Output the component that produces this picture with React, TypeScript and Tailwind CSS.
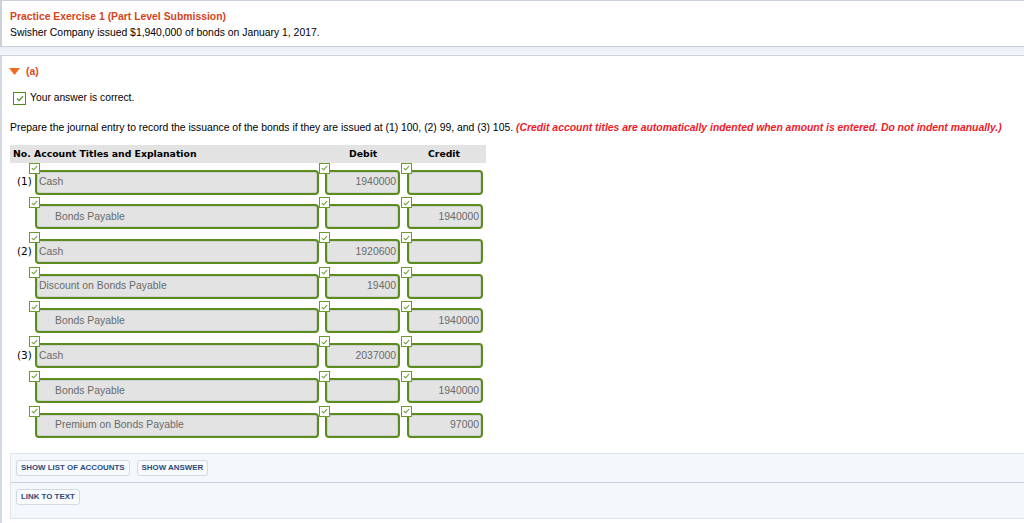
import React from 'react';

type Row = { no?: string; account: string; indent?: boolean; debit?: string; credit?: string };

const rows: Row[] = [
  { no: '(1)', account: 'Cash', debit: '1940000' },
  { account: 'Bonds Payable', indent: true, credit: '1940000' },
  { no: '(2)', account: 'Cash', debit: '1920600' },
  { account: 'Discount on Bonds Payable', debit: '19400' },
  { account: 'Bonds Payable', indent: true, credit: '1940000' },
  { no: '(3)', account: 'Cash', debit: '2037000' },
  { account: 'Bonds Payable', indent: true, credit: '1940000' },
  { account: 'Premium on Bonds Payable', indent: true, credit: '97000' },
];

function MiniCheck() {
  return (
    <span className="absolute -left-[6px] -top-[7px] flex h-[11px] w-[11px] items-center justify-center border border-[#6a9a2e] bg-white">
      <svg width="7" height="6" viewBox="0 0 7 6">
        <path d="M0.8 3.2 L2.7 4.8 L6.2 1" fill="none" stroke="#5f9a2a" strokeWidth="1.1" />
      </svg>
    </span>
  );
}

function Field({ width, value, align, indent }: { width: string; value?: string; align?: 'right'; indent?: boolean }) {
  return (
    <div className={`relative ${width}`}>
      <MiniCheck />
      <div
        className={`flex h-[25px] items-center rounded-[4px] border-2 border-[#5b8c1e] bg-[#e3e3e3] text-[10.4px] text-[#6a6a6a] shadow-[inset_0_0_0_1px_#d0d0d0] ${
          align === 'right' ? 'justify-end pr-[2px]' : indent ? 'pl-[18px]' : 'pl-[2px]'
        }`}
      >
        {value}
      </div>
    </div>
  );
}

const btn =
  'flex h-[16px] items-center rounded-[3px] border border-[#d3dae4] bg-[#f8fafc] px-[4px] text-[7.9px] font-bold text-[#2c4a7c]';

export default function App() {
  return (
    <div className="min-h-[523px] w-[1024px] bg-white font-['Liberation_Sans',Arial,sans-serif] text-black">
      <div className="h-[47px] border-t border-l-2 border-b border-[#cbd2dc] px-[8px] pt-[8px] text-[10.4px] leading-[16px]">
        <div className="font-bold text-[#d4451c]">Practice Exercise 1 (Part Level Submission)</div>
        <div>Swisher Company issued $1,940,000 of bonds on January 1, 2017.</div>
      </div>
      <div className="h-[9px] border-b border-[#cbd2dc] bg-gradient-to-b from-[#e8edf4] to-[#f4f7fa]" />

      <div className="border-l-2 border-[#d3d9e3] pb-[5px]">
        <div className="flex h-[30px] items-center gap-[6px] pl-[7px] pt-[1px]">
          <svg width="11" height="7" viewBox="0 0 11 7">
            <path d="M0 0 H11 L5.5 7 Z" fill="#f06a24" />
          </svg>
          <span className="text-[10.4px] font-bold text-[#dc4a1e]">(a)</span>
        </div>

        <div className="flex h-[20px] items-center gap-[4px] pl-[11px] pt-[4px]">
          <span className="flex h-[13px] w-[13px] items-center justify-center border-[1.5px] border-[#4f8a1e] bg-white">
            <svg width="8" height="7" viewBox="0 0 8 7">
              <path d="M1 3.6 L3.1 5.5 L7 1.2" fill="none" stroke="#5d9a2b" strokeWidth="1.3" />
            </svg>
          </span>
          <span className="text-[10.3px]">Your answer is correct.</span>
        </div>

        <div className="pl-[8px] pt-[15px] text-[10.4px] leading-[14px]">
          Prepare the journal entry to record the issuance of the bonds if they are issued at (1) 100, (2) 99, and (3) 105.{' '}
          <span className="font-bold italic text-[#ee1a2a]">
            (Credit account titles are automatically indented when amount is entered. Do not indent manually.)
          </span>
        </div>

        <div className="ml-[8px] mt-[10px] flex h-[18px] w-[476px] items-center bg-[#e3e3e3] font-['DejaVu_Sans',Verdana,sans-serif] text-[9.3px] font-bold">
          <span className="w-[24px] pl-[3px]">No.</span>
          <span className="w-[288px]">Account Titles and Explanation</span>
          <span className="w-[76px] pl-[27px]">Debit</span>
          <span className="pl-[30px]">Credit</span>
        </div>

        <div className="-mt-[3px] pl-[8px]">
          {rows.map((r, i) => (
            <div key={i} className="flex h-[34.7px] items-end">
              <div className="flex h-[25px] w-[25px] items-center pl-[7px] font-['DejaVu_Sans',Verdana,sans-serif] text-[10.5px]">
                {r.no}
              </div>
              <div className="flex">
                <Field width="w-[284px]" value={r.account} indent={r.indent} />
                <div className="w-[6px]" />
                <Field width="w-[75px]" value={r.debit} align="right" />
                <div className="w-[7px]" />
                <Field width="w-[76px]" value={r.credit} align="right" />
              </div>
            </div>
          ))}
        </div>

        <div className="ml-[8px] mt-[15px] border border-r-0 border-[#dfe4eb] bg-[#f4f7fb]">
          <div className="flex h-[29px] items-center gap-[7px] border-b border-[#c9cfe0] pl-[5px]">
            <button className={btn}>SHOW LIST OF ACCOUNTS</button>
            <button className={btn}>SHOW ANSWER</button>
          </div>
          <div className="flex h-[35px] items-start pl-[5px] pt-[6px]">
            <button className={btn}>LINK TO TEXT</button>
          </div>
        </div>
      </div>
    </div>
  );
}
